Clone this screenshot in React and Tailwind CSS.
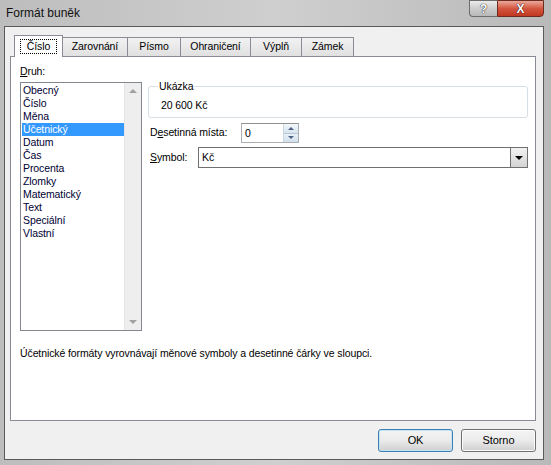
import React from "react";

const tabs = ["Číslo", "Zarovnání", "Písmo", "Ohraničení", "Výplň", "Zámek"];
const tabWidths = ["w-[49px]", "w-[66px]", "w-[54px]", "w-[71px]", "w-[52px]", "w-[53px]"];

const druhy = [
  "Obecný",
  "Číslo",
  "Měna",
  "Účetnický",
  "Datum",
  "Čas",
  "Procenta",
  "Zlomky",
  "Matematický",
  "Text",
  "Speciální",
  "Vlastní",
];

function TitleButtons() {
  return (
    <div className="ml-auto mr-[7px] flex h-[17px]">
      <div className="w-[28px] h-full rounded-bl-[4px] border border-[#6d6d6d] border-r-0 bg-gradient-to-b from-[#ececec] via-[#cdcdcd] to-[#b8b8b8] flex items-center justify-center text-[12px] font-bold text-white [text-shadow:0_0_1px_#222,0_0_1px_#222]">
        ?
      </div>
      <div className="w-[47px] h-full rounded-br-[4px] border border-[#6d2a20] bg-gradient-to-b from-[#e9a99b] via-[#d4553f] to-[#c1371f] flex items-center justify-center text-[12px] font-bold text-white [text-shadow:0_0_1px_#301,0_0_1px_#301]">
        X
      </div>
    </div>
  );
}

function Spin() {
  return (
    <div className="w-[15px] h-full flex flex-col border-l border-[#c9d5df]">
      <div className="flex-1 bg-gradient-to-b from-[#f4f8fb] to-[#d6e4ef] border-b border-[#b4c6d4] flex items-center justify-center">
        <span className="block w-0 h-0 border-x-[3px] border-x-transparent border-b-[3px] border-b-[#4d6185]" />
      </div>
      <div className="flex-1 bg-gradient-to-b from-[#eaf1f7] to-[#d0dfeb] flex items-center justify-center">
        <span className="block w-0 h-0 border-x-[3px] border-x-transparent border-t-[3px] border-t-[#4d6185]" />
      </div>
    </div>
  );
}

export default function App() {
  return (
    <div className="w-[551px] h-[465px] flex flex-col overflow-hidden bg-gradient-to-r from-[#bdbdbd] via-[#cfcfcf] to-[#b9b9b9] font-['Liberation_Sans',sans-serif] text-[10.5px] tracking-[-0.1px] text-black">
      {/* title bar */}
      <div className="h-[26px] flex items-start">
        <div className="pl-[6px] pt-[6px] text-[12px] leading-[14px] tracking-normal text-[#111]">Formát buněk</div>
        <TitleButtons />
      </div>

      <div className="flex-1 flex pl-[4px] pr-[7px] pb-[5px]">
        <div className="flex-1 flex flex-col border border-[#5a5a5a] bg-[#f0f0f0] pl-[5px] pr-[7px] pt-[8px]">
          {/* tabs */}
          <div className="h-[21px] flex items-end pl-[4px]">
            {tabs.map((t, i) =>
              i === 0 ? (
                <div
                  key={t}
                  className={`${tabWidths[i]} h-[22px] -mb-[1px] z-10 bg-white border border-b-0 border-[#898c95] flex items-center justify-center`}
                >
                  <span className="px-[6px] leading-[13px] outline-1 outline-dotted outline-black">{t}</span>
                </div>
              ) : (
                <div
                  key={t}
                  className={`${tabWidths[i]} h-[19px] bg-gradient-to-b from-[#f2f2f2] to-[#e0e0e0] border border-[#898c95] border-b-0 -ml-[1px] flex items-center justify-center`}
                >
                  {t}
                </div>
              )
            )}
          </div>

          {/* panel */}
          <div className="h-[365px] bg-white border border-[#898c95] flex flex-col pl-[9px] pr-[7px] pt-[8px]">
            <div className="flex gap-[6px]">
              <div className="w-[122px] flex flex-col">
                <div className="h-[13px] leading-[13px]">
                  <span className="underline">D</span>ruh:
                </div>
                <div className="mt-[4px] h-[249px] border border-[#828790] flex">
                  <div className="flex-1 pt-[1px] pl-[1px]">
                    {druhy.map((d) => (
                      <div
                        key={d}
                        className={`h-[13px] leading-[13px] pl-[1px] ${d === "Účetnický" ? "bg-[#3399ff] text-white" : "text-[#000033]"}`}
                      >
                        {d}
                      </div>
                    ))}
                  </div>
                  <div className="w-[17px] bg-[#eeeeee] border-l border-[#e4e4e4] flex flex-col justify-between items-center py-[6px]">
                    <span className="block w-0 h-0 border-x-[4px] border-x-transparent border-b-[4px] border-b-[#a0a0a0]" />
                    <span className="block w-0 h-0 border-x-[4px] border-x-transparent border-t-[4px] border-t-[#a0a0a0]" />
                  </div>
                </div>
              </div>

              <div className="flex-1 flex flex-col pt-[15px]">
                <fieldset className="border border-[#d5dfe5] rounded-[3px] pl-[8px] pb-[5px] min-w-0">
                  <legend className="ml-[1px] px-[1px] leading-[13px]">Ukázka</legend>
                  <div className="pl-[4px] pt-[6px] leading-[13px]">20 600 Kč</div>
                </fieldset>

                <div className="mt-[5px] flex items-center h-[20px]">
                  <div className="w-[93px] pl-[2px]">
                    D<span className="underline">e</span>setinná místa:
                  </div>
                  <div className="w-[58px] h-[20px] border border-[#abadb3] border-t-[#8e8f8f] bg-white flex">
                    <div className="flex-1 pl-[3px] leading-[18px]">0</div>
                    <Spin />
                  </div>
                </div>

                <div className="mt-[4px] flex items-center h-[21px]">
                  <div className="w-[50px] pl-[2px]">
                    <span className="underline">S</span>ymbol:
                  </div>
                  <div className="flex-1 h-[21px] border border-[#707070] bg-white flex">
                    <div className="flex-1 pl-[3px] leading-[19px]">Kč</div>
                    <div className="w-[17px] h-full border-l border-[#707070] bg-gradient-to-b from-[#f2f2f2] to-[#d4d4d4] flex items-center justify-center">
                      <span className="block w-0 h-0 border-x-[4px] border-x-transparent border-t-[4px] border-t-black" />
                    </div>
                  </div>
                </div>
              </div>
            </div>

            <div className="mt-[16px] leading-[13px]">
              Účetnické formáty vyrovnávají měnové symboly a desetinné čárky ve sloupci.
            </div>
          </div>

          {/* buttons */}
          <div className="mt-[8px] flex justify-end gap-[8px]">
            <button className="w-[75px] h-[23px] rounded-[3px] border border-[#3c7fb1] bg-gradient-to-b from-[#f4f4f4] via-[#ebebeb] to-[#cfcfcf] text-[11px] shadow-[inset_0_0_0_1px_#c3e4f7]">
              OK
            </button>
            <button className="w-[75px] h-[23px] rounded-[3px] border border-[#707070] bg-gradient-to-b from-[#f4f4f4] via-[#ebebeb] to-[#cfcfcf] text-[11px] shadow-[inset_0_0_0_1px_#fbfbfb]">
              Storno
            </button>
          </div>
        </div>
      </div>
    </div>
  );
}
